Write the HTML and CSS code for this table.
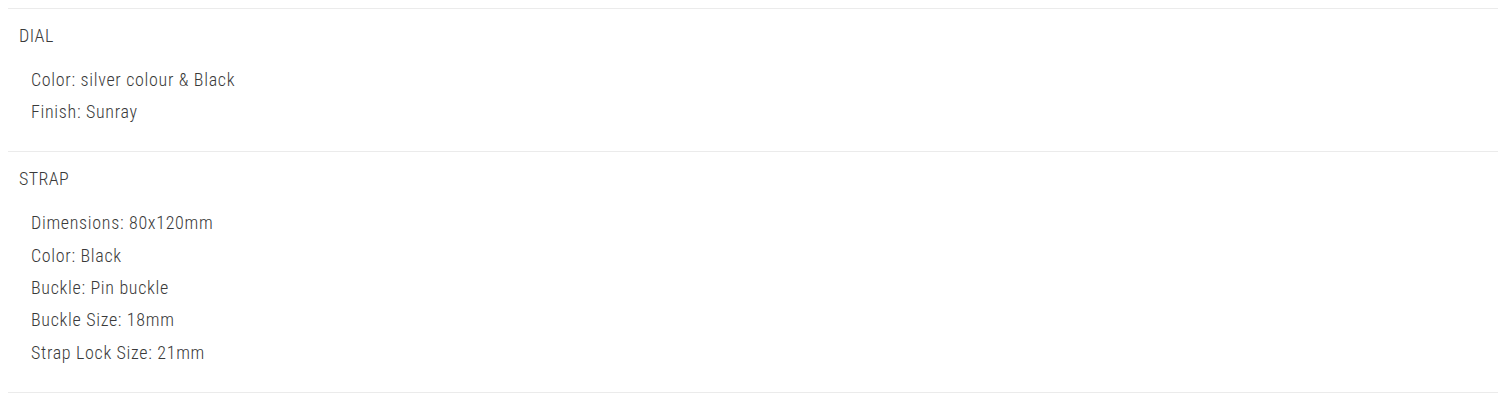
FILE: index.html
```html
<!DOCTYPE html>
<html>
<head>
<meta charset="utf-8">
<link rel="stylesheet" href="styles.css">
</head>
<body>
<div class="specs">
  <section class="spec">
    <h3 class="spec-title">DIAL</h3>
    <ul class="spec-list">
      <li>Color: silver colour &amp; Black</li>
      <li>Finish: Sunray</li>
    </ul>
  </section>
  <section class="spec">
    <h3 class="spec-title">STRAP</h3>
    <ul class="spec-list">
      <li>Dimensions: 80x120mm</li>
      <li>Color: Black</li>
      <li>Buckle: Pin buckle</li>
      <li>Buckle Size: 18mm</li>
      <li>Strap Lock Size: 21mm</li>
    </ul>
  </section>
</div>
</body>
</html>
```
FILE: styles.css
```css
html, body {
  margin: 0;
  padding: 0;
  background: #fff;
}
body {
  padding: 8px 0 0 8px;
  font-family: "Roboto", "Liberation Sans", sans-serif;
  font-stretch: condensed;
  color: #3a3a3a;
}
.specs {
  border-bottom: 1px solid #ebebeb;
}
.spec {
  border-top: 1px solid #ebebeb;
  padding: 16.5px 0 22.8px 11px;
}
.spec-title {
  margin: 0;
  font-size: 18px;
  font-weight: 350;
  line-height: 20px;
  letter-spacing: 0.4px;
}
.spec-list {
  list-style: none;
  margin: 18.5px 0 0 0;
  padding: 0 0 0 12px;
}
.spec-list li {
  font-size: 18px;
  font-weight: 350;
  line-height: 32.33px;
  letter-spacing: 0.68px;
}
```
